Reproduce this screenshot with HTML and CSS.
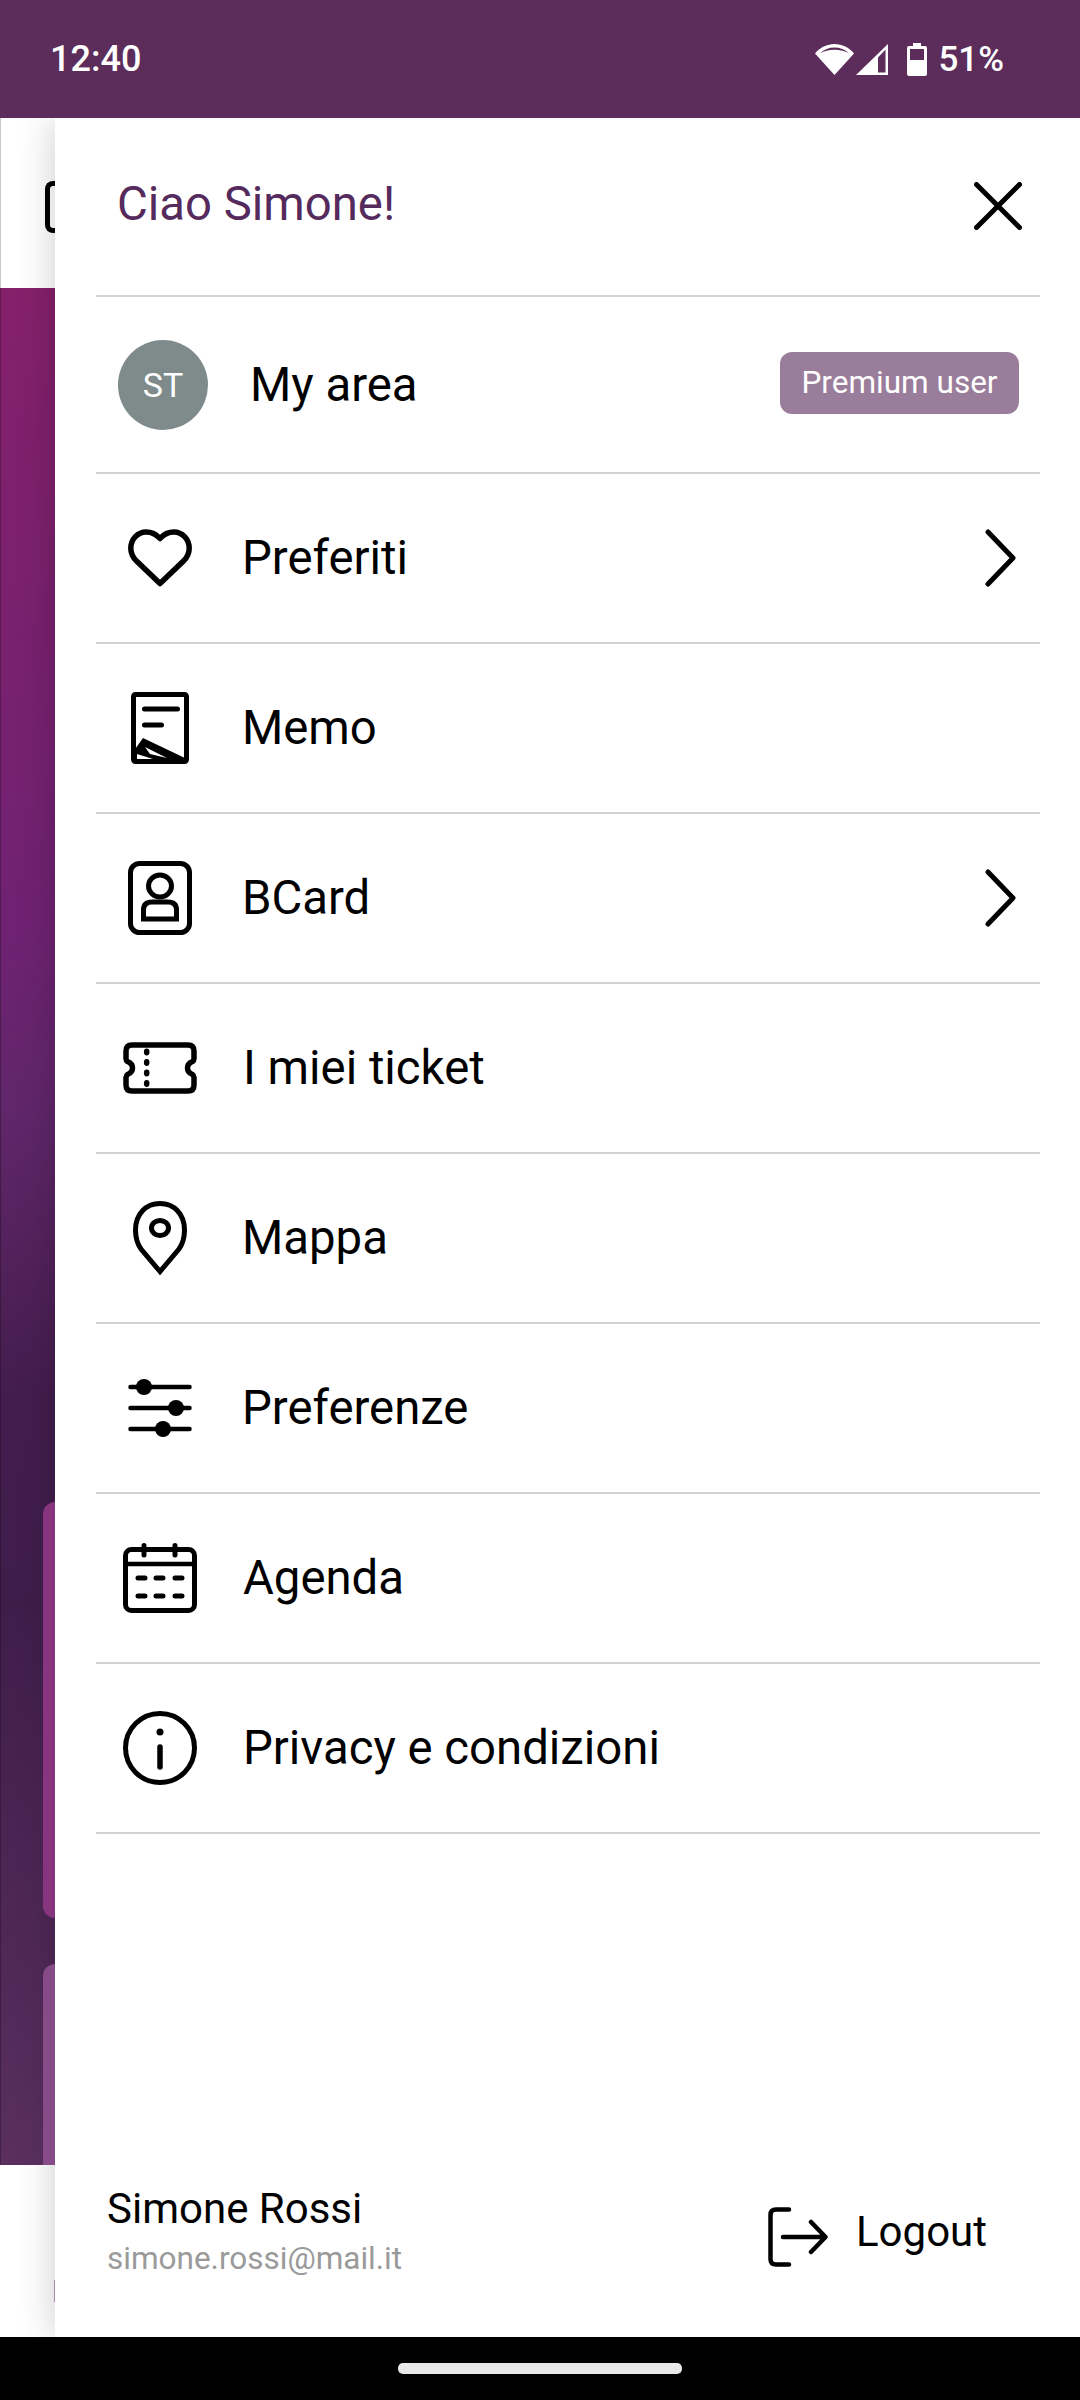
FILE: index.html
```html
<!DOCTYPE html>
<html lang="it">
<head>
<meta charset="utf-8">
<title>Menu</title>
<link rel="stylesheet" href="styles.css">
</head>
<body>
<div class="phone">
  <header class="status">
    <span class="clock">12:40</span>
    <div class="status-right">
      <svg class="st-wifi" width="39" height="31" viewBox="0 0 39 31"><path d="M19.5 31 0 9.5C5 3.5 12 0 19.5 0S34 3.5 39 9.5Z" fill="#fff"/><path d="M5 9.3C9 5.6 14 3.6 19.5 3.6S30 5.6 34 9.3C30 7 25 5.8 19.5 5.8S9 7 5 9.3Z" fill="#5c2d5b"/></svg>
      <svg class="st-signal" width="32" height="31" viewBox="0 0 32 31"><path d="M32 0V31H0Z" fill="#fff"/><path d="M22 13.5 29.5 5.5V28.5H22Z" fill="#5c2d5b"/></svg>
      <svg class="st-batt" width="20" height="33" viewBox="0 0 20 33"><path d="M6 0H14V3H18Q20 3 20 5V31Q20 33 18 33H2Q0 33 0 31V5Q0 3 2 3H6Z" fill="#fff"/><rect x="3" y="6" width="14" height="11" fill="#5c2d5b"/></svg>
      <span class="pct">51%</span>
    </div>
  </header>
  <div class="stage">
    <div class="behind">
      <div class="behind-top"><span class="bracket"></span></div>
      <div class="behind-main">
        <div class="peek peek-one"></div>
        <div class="peek peek-two"></div>
      </div>
      <div class="behind-foot"><span class="sliver"></span></div>
    </div>
    <aside class="drawer">
      <div class="hello">
        <span class="hello-text">Ciao Simone!</span>
        <svg class="close" width="48" height="48" viewBox="0 0 48 48"><path d="M2.500 2.500 45.500 45.500M45.500 2.500 2.500 45.500" stroke="#000" stroke-width="5" stroke-linecap="round" fill="none"/></svg>
      </div>
      <div class="area">
        <span class="avatar">ST</span>
        <span class="area-text">My area</span>
        <span class="badge">Premium user</span>
      </div>
      <ul class="menu">
        <li class="row">
          <span class="ico"><svg width="64" height="58" viewBox="0 0 64 58"><path d="M32 54.5 8.5 32C4.500 28 2.800 24 2.800 19.500 2.800 10 10 3 18 3 23.500 3 28.500 5.500 32 9.500 35.500 5.500 40.500 3 46 3 54 3 61.200 10 61.200 19.500 61.200 24 59.500 28 55.500 32Z" stroke="#000" stroke-width="5.500" stroke-linejoin="round" fill="none"/></svg></span>
          <span class="label">Preferiti</span>
          <svg class="chev" width="31" height="58" viewBox="0 0 31 58"><path d="M3 3 28 29 3 55" stroke="#000" stroke-width="5" stroke-linecap="round" stroke-linejoin="round" fill="none"/></svg>
        </li>
        <li class="row">
          <span class="ico"><svg width="58" height="74" viewBox="0 0 58 74"><rect x="2.500" y="3.500" width="53" height="67" rx="2" stroke="#000" stroke-width="5" fill="none"/><path d="M13.500 18H46.500M13.500 34H30.500" stroke="#000" stroke-width="5" stroke-linecap="round" fill="none"/><path d="M2 61 12 47 56 68V72H2Z"/><path d="M14 56 36 67 19 63Z" fill="#fff"/><path d="M6 63 22 68H6Z" fill="#fff"/></svg></span>
          <span class="label">Memo</span>
        </li>
        <li class="row">
          <span class="ico"><svg width="64" height="74" viewBox="0 0 64 74"><rect x="2.500" y="2.500" width="59" height="69" rx="9" stroke="#000" stroke-width="5" fill="none"/><ellipse cx="32" cy="25" rx="11.500" ry="11" stroke="#000" stroke-width="5" fill="none"/><path d="M15.500 58V49Q15.500 41 24 41H40Q48.500 41 48.500 49V58Z" stroke="#000" stroke-width="5" stroke-linejoin="miter" fill="none"/></svg></span>
          <span class="label">BCard</span>
          <svg class="chev" width="31" height="58" viewBox="0 0 31 58"><path d="M3 3 28 29 3 55" stroke="#000" stroke-width="5" stroke-linecap="round" stroke-linejoin="round" fill="none"/></svg>
        </li>
        <li class="row">
          <span class="ico"><svg width="74" height="52" viewBox="0 0 74 52"><path d="M9 3H65Q71 3 71 9V16.500Q71 18.500 69.500 19.500 64.500 21.500 64.500 26T69.500 32.500Q71 33.500 71 35.500V43Q71 49 65 49H9Q3 49 3 43V35.500Q3 33.500 4.500 32.500 9.500 30.500 9.500 26T4.500 19.500Q3 18.500 3 16.500V9Q3 3 9 3Z" stroke="#000" stroke-width="5.500" stroke-linejoin="round" fill="none"/><ellipse cx="23.700" cy="10" rx="2.800" ry="3.400"/><ellipse cx="23.700" cy="20.500" rx="2.800" ry="3.400"/><ellipse cx="23.700" cy="31" rx="2.800" ry="3.400"/><ellipse cx="23.700" cy="41.500" rx="2.800" ry="3.400"/></svg></span>
          <span class="label">I miei ticket</span>
        </li>
        <li class="row">
          <span class="ico"><svg width="54" height="74" viewBox="0 0 54 74"><path d="M27 70.500 8 48C4.500 43 2.500 36 2.500 29 2.500 13 13 2.500 27 2.500S51.500 13 51.500 29C51.500 36 49.500 43 46 48Z" stroke="#000" stroke-width="5" fill="none"/><ellipse cx="27" cy="27" rx="8.500" ry="7.500" stroke="#000" stroke-width="5" fill="none"/></svg></span>
          <span class="label">Mappa</span>
        </li>
        <li class="row">
          <span class="ico"><svg width="64" height="60" viewBox="0 0 64 60"><path d="M2.500 9H61.500M2.500 30H61.500M2.500 51H61.500" stroke="#000" stroke-width="4.500" stroke-linecap="round" fill="none"/><ellipse cx="16" cy="9" rx="8" ry="8"/><ellipse cx="48" cy="30" rx="8" ry="8"/><ellipse cx="35" cy="51" rx="8" ry="8"/></svg></span>
          <span class="label">Preferenze</span>
        </li>
        <li class="row">
          <span class="ico"><svg width="74" height="70" viewBox="0 0 74 70"><rect x="2.500" y="6.500" width="69" height="61" rx="6" stroke="#000" stroke-width="5" fill="none"/><path d="M3 21H71" stroke="#000" stroke-width="4.500" fill="none"/><path d="M21 2.500V12M52 2.500V12" stroke="#000" stroke-width="5" stroke-linecap="round" fill="none"/><path d="M15 35H22M33 35H40M52 35H59M15 53H22M33 53H40M52 53H59" stroke="#000" stroke-width="5" stroke-linecap="round" fill="none"/></svg></span>
          <span class="label">Agenda</span>
        </li>
        <li class="row">
          <span class="ico"><svg width="74" height="74" viewBox="0 0 74 74"><circle cx="37" cy="37" r="34.500" stroke="#000" stroke-width="5" fill="none"/><circle cx="37" cy="21" r="3.500"/><path d="M37 36V56" stroke="#000" stroke-width="5.500" stroke-linecap="round" fill="none"/></svg></span>
          <span class="label">Privacy e condizioni</span>
        </li>
      </ul>
      <footer class="foot">
        <div class="who">
          <span class="who-name">Simone Rossi</span>
          <span class="who-mail">simone.rossi@mail.it</span>
        </div>
        <div class="logout">
          <svg width="60" height="60" viewBox="0 0 60 60"><path d="M21 2.500H8Q2.500 2.500 2.500 8V52Q2.500 57.500 8 57.500H21" stroke="#000" stroke-width="4.500" stroke-linecap="round" fill="none"/><path d="M15 30H57M43 15 57.500 30 43 45" stroke="#000" stroke-width="4.500" stroke-linecap="round" stroke-linejoin="round" fill="none"/></svg>
          <span class="logout-text">Logout</span>
        </div>
      </footer>
    </aside>
  </div>
  <div class="navbar"><span class="pill"></span></div>
</div>
</body>
</html>
```

FILE: styles.css
```css
* { box-sizing: border-box; }
html, body { margin: 0; padding: 0; }
body { width: 1080px; height: 2400px; overflow: hidden; font-family: Roboto, "Liberation Sans", sans-serif; background: #fff; color: #000; }
.phone { display: flex; flex-direction: column; width: 1080px; height: 2400px; }

.status { position: relative; z-index: 3; flex: 0 0 118px; height: 118px; background: #5c2d5b; color: #fff; display: flex; align-items: center; justify-content: space-between; padding: 0 76px 0 50px; }
.clock { font-size: 36px; font-weight: 500; }
.status-right { display: flex; align-items: center; }
.st-signal { margin-left: 2px; }
.st-batt { margin-left: 19px; }
.pct { margin-left: 11px; font-size: 35px; font-weight: 500; }

.stage { flex: 1 1 auto; display: flex; min-height: 0; }
.behind { flex: 0 0 55px; display: flex; flex-direction: column; }
.behind-top { flex: 0 0 170px; background: #fff; box-shadow: inset 1px 0 0 #c8c8c8; padding: 63px 0 0 45px; }
.bracket { position: relative; z-index: 2; display: block; width: 10px; height: 52px; border: 5px solid #000; border-right: 0; border-radius: 8px 0 0 8px; }
.behind-main { flex: 1 1 auto; display: flex; flex-direction: column; padding: 1214px 0 0 43px; box-shadow: inset 1px 0 0 rgba(0, 0, 0, .25); background: linear-gradient(180deg, #85206b 0, #6f2272 34%, #60266a 44%, #502158 53%, #431d4e 59%, #3f1d4b 70%, #5a2f60 100%); }
.peek { position: relative; z-index: 2; width: 12px; border-radius: 18px 0 0 18px; }
.peek-one { height: 416px; background: #88357f; }
.peek-two { height: 201px; margin-top: 46px; background: #874b87; border-radius: 18px 0 0 0; }
.behind-foot { flex: 0 0 172px; background: #fff; padding: 115px 0 0 54px; }
.sliver { position: relative; z-index: 2; display: block; width: 1px; height: 22px; background: #a888a8; }

.drawer { position: relative; z-index: 1; flex: 1 1 auto; background: #fff; box-shadow: 0 0 36px rgba(0, 0, 0, .2); display: flex; flex-direction: column; padding: 0 40px 0 41px; }
.hello { flex: 0 0 179px; border-bottom: 2px solid #d3d3d3; display: flex; align-items: flex-start; justify-content: space-between; padding: 60px 18px 0 21px; }
.hello-text { font-size: 47.3px; line-height: 52px; color: #552a5c; }
.close { margin-top: 4px; }
.area { flex: 0 0 177px; border-bottom: 2px solid #d3d3d3; display: flex; align-items: center; padding: 0 21px 0 22px; }
.avatar { width: 90px; height: 90px; border-radius: 50%; background: #7f8b8b; color: #fff; font-size: 34px; display: flex; align-items: center; justify-content: center; }
.area-text { flex: 1 1 auto; font-size: 47.3px; margin-left: 42px; }
.badge { width: 239px; height: 62px; margin-bottom: 4px; border-radius: 12px; background: #9a7d9a; color: #fff; font-size: 31.5px; display: flex; align-items: center; justify-content: center; }

.menu { list-style: none; margin: 0; padding: 0; }
.row { height: 170px; border-bottom: 2px solid #d3d3d3; display: flex; align-items: center; padding: 0 24px 0 27px; }
.ico { flex: 0 0 73px; display: flex; align-items: center; justify-content: center; }
.label { flex: 1 1 auto; margin-left: 46px; font-size: 47.3px; }

.foot { margin-top: auto; flex: 0 0 180px; display: flex; justify-content: space-between; padding: 26px 53px 0 11px; }
.who { display: flex; flex-direction: column; }
.who-name { font-size: 42px; line-height: 52px; }
.who-mail { font-size: 31.5px; line-height: 40px; margin-top: 4px; color: #9a9a9a; }
.logout { display: flex; align-items: center; height: 60px; margin-top: 24px; }
.logout-text { font-size: 42px; margin-left: 28px; margin-top: -12px; }

.navbar { position: relative; z-index: 3; flex: 0 0 63px; background: #000; padding-top: 26px; display: flex; justify-content: center; align-items: flex-start; }
.pill { width: 284px; height: 11px; border-radius: 5px; background: #e8e8e8; }
```
